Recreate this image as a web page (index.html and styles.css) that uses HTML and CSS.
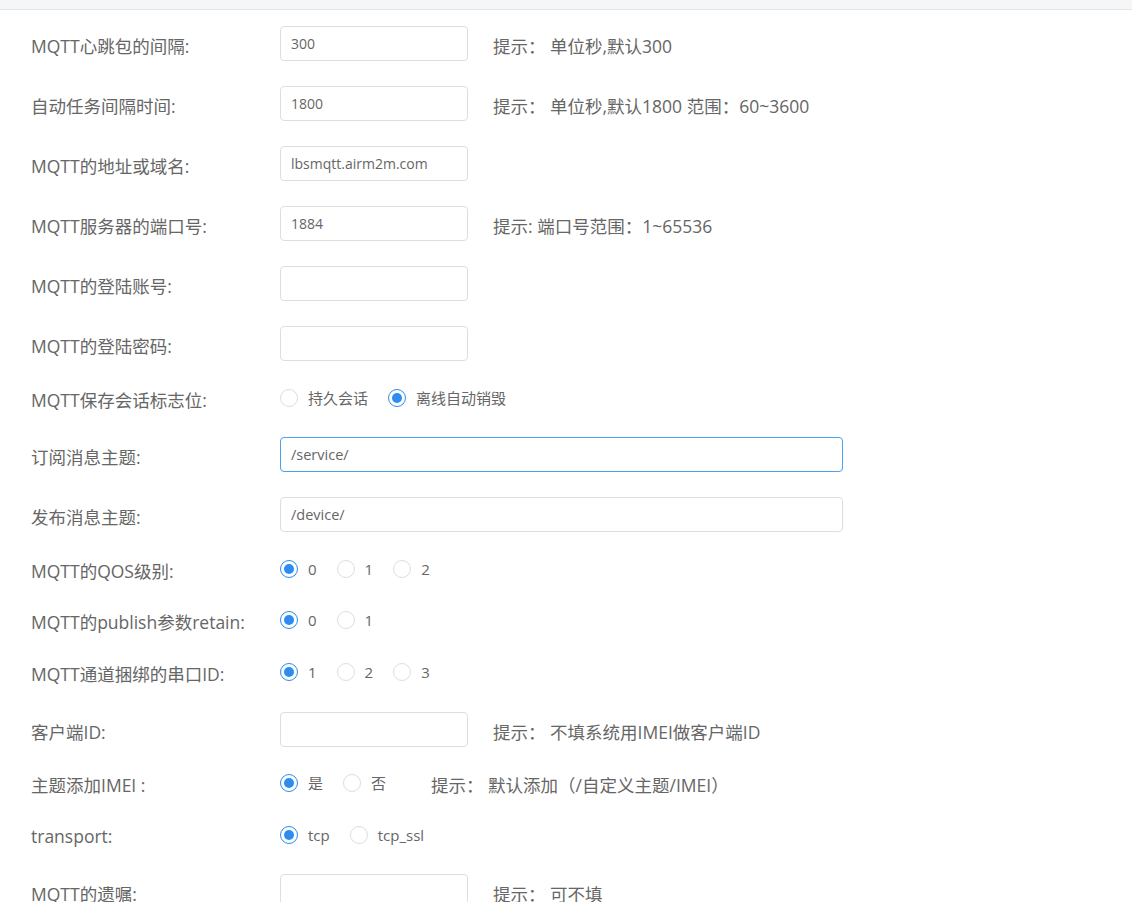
FILE: index.html
```html
<!DOCTYPE html>
<html lang="zh-CN">
<head>
<meta charset="utf-8">
<title>MQTT设置</title>
<link rel="stylesheet" href="styles.css">
</head>
<body>
<div class="topbar"></div>
<form class="form">
  <div class="item">
    <label class="label">MQTT心跳包的间隔:</label>
    <input class="input" type="text" value="300">
    <span class="hint">提示： 单位秒,默认300</span>
  </div>
  <div class="item">
    <label class="label">自动任务间隔时间:</label>
    <input class="input" type="text" value="1800">
    <span class="hint">提示： 单位秒,默认1800 范围：60~3600</span>
  </div>
  <div class="item">
    <label class="label">MQTT的地址或域名:</label>
    <input class="input" type="text" value="lbsmqtt.airm2m.com">
  </div>
  <div class="item">
    <label class="label">MQTT服务器的端口号:</label>
    <input class="input" type="text" value="1884">
    <span class="hint">提示: 端口号范围：1~65536</span>
  </div>
  <div class="item">
    <label class="label">MQTT的登陆账号:</label>
    <input class="input" type="text" value="">
  </div>
  <div class="item">
    <label class="label">MQTT的登陆密码:</label>
    <input class="input" type="password" value="">
  </div>
  <div class="item item-radio">
    <label class="label">MQTT保存会话标志位:</label>
    <div class="radios">
      <span class="radio"><span class="circle"></span><span class="rtext">持久会话</span></span>
      <span class="radio checked"><span class="circle"></span><span class="rtext">离线自动销毁</span></span>
    </div>
  </div>
  <div class="item">
    <label class="label">订阅消息主题:</label>
    <input class="input input-wide focused" type="text" value="/service/">
  </div>
  <div class="item">
    <label class="label">发布消息主题:</label>
    <input class="input input-wide" type="text" value="/device/">
  </div>
  <div class="item item-radio">
    <label class="label">MQTT的QOS级别:</label>
    <div class="radios">
      <span class="radio checked"><span class="circle"></span><span class="rtext">0</span></span>
      <span class="radio"><span class="circle"></span><span class="rtext">1</span></span>
      <span class="radio"><span class="circle"></span><span class="rtext">2</span></span>
    </div>
  </div>
  <div class="item item-radio">
    <label class="label">MQTT的publish参数retain:</label>
    <div class="radios">
      <span class="radio checked"><span class="circle"></span><span class="rtext">0</span></span>
      <span class="radio"><span class="circle"></span><span class="rtext">1</span></span>
    </div>
  </div>
  <div class="item item-radio">
    <label class="label">MQTT通道捆绑的串口ID:</label>
    <div class="radios">
      <span class="radio checked"><span class="circle"></span><span class="rtext">1</span></span>
      <span class="radio"><span class="circle"></span><span class="rtext">2</span></span>
      <span class="radio"><span class="circle"></span><span class="rtext">3</span></span>
    </div>
  </div>
  <div class="item">
    <label class="label">客户端ID:</label>
    <input class="input" type="text" value="">
    <span class="hint">提示： 不填系统用IMEI做客户端ID</span>
  </div>
  <div class="item item-radio">
    <label class="label">主题添加IMEI :</label>
    <div class="radios">
      <span class="radio checked"><span class="circle"></span><span class="rtext">是</span></span>
      <span class="radio"><span class="circle"></span><span class="rtext">否</span></span>
    </div>
    <span class="hint">提示： 默认添加（/自定义主题/IMEI）</span>
  </div>
  <div class="item item-radio">
    <label class="label">transport:</label>
    <div class="radios">
      <span class="radio checked"><span class="circle"></span><span class="rtext">tcp</span></span>
      <span class="radio"><span class="circle"></span><span class="rtext">tcp_ssl</span></span>
    </div>
  </div>
  <div class="item">
    <label class="label">MQTT的遗嘱:</label>
    <input class="input" type="text" value="">
    <span class="hint">提示： 可不填</span>
  </div>
</form>
</body>
</html>
```

FILE: styles.css
```css
html, body {
  margin: 0;
  padding: 0;
  background: #ffffff;
}

body {
  font-family: "Open Sans", "Noto Sans CJK SC", sans-serif;
  color: #666;
}

.topbar {
  height: 9px;
  background: #f5f6f8;
  border-bottom: 1px solid #e3e4e6;
}

.form {
  padding: 16px 0 0 31px;
}

.item {
  display: flex;
  align-items: center;
  height: 35px;
  margin-bottom: 25px;
}

.item-radio {
  height: 26.4px;
}

.label {
  width: 249px;
  flex: none;
  font-size: 17.5px;
  color: #666;
  white-space: nowrap;
}

.item:not(.item-radio) .label,
.item:not(.item-radio) .hint {
  padding-top: 4px;
}

.input {
  box-sizing: border-box;
  width: 188px;
  height: 35px;
  margin: 0;
  padding: 0 10px;
  border: 1px solid #dcdee2;
  border-radius: 4px;
  background: #fff;
  font-family: "Open Sans", "Noto Sans CJK SC", sans-serif;
  font-size: 14px;
  color: #666;
  outline: none;
}

.input-wide {
  width: 563px;
  font-size: 14.5px;
}

.input.focused {
  border-color: #4aa1ee;
}

.hint {
  margin-left: 25px;
  font-size: 17.5px;
  color: #666;
  white-space: nowrap;
}

.radios {
  display: flex;
  align-items: center;
  margin-bottom: 3px;
}

.radio {
  display: flex;
  align-items: center;
  margin-right: 20px;
  font-size: 15px;
  color: #666;
}

.radio .circle {
  box-sizing: border-box;
  width: 18px;
  height: 18px;
  border: 1px solid #dcdee2;
  border-radius: 50%;
  margin-right: 10px;
  background: #fff;
  display: flex;
  align-items: center;
  justify-content: center;
}

.radio.checked .circle {
  border-color: #2d8cf0;
}

.radio.checked .circle::after {
  content: "";
  width: 10px;
  height: 10px;
  border-radius: 50%;
  background: #2d8cf0;
}

.rtext {
  line-height: 20px;
}
```
